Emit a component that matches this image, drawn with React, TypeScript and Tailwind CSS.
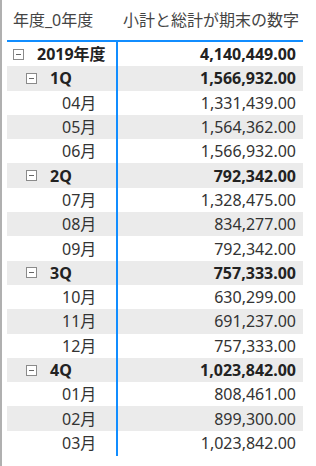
import React from "react";

type Row = { label: string; value: string; level: 0 | 1 | 2; shaded: boolean };

const rows: Row[] = [
	{ label: "2019年度", value: "4,140,449.00", level: 0, shaded: false },
	{ label: "1Q", value: "1,566,932.00", level: 1, shaded: true },
	{ label: "04月", value: "1,331,439.00", level: 2, shaded: false },
	{ label: "05月", value: "1,564,362.00", level: 2, shaded: true },
	{ label: "06月", value: "1,566,932.00", level: 2, shaded: false },
	{ label: "2Q", value: "792,342.00", level: 1, shaded: true },
	{ label: "07月", value: "1,328,475.00", level: 2, shaded: false },
	{ label: "08月", value: "834,277.00", level: 2, shaded: true },
	{ label: "09月", value: "792,342.00", level: 2, shaded: false },
	{ label: "3Q", value: "757,333.00", level: 1, shaded: true },
	{ label: "10月", value: "630,299.00", level: 2, shaded: false },
	{ label: "11月", value: "691,237.00", level: 2, shaded: true },
	{ label: "12月", value: "757,333.00", level: 2, shaded: false },
	{ label: "4Q", value: "1,023,842.00", level: 1, shaded: true },
	{ label: "01月", value: "808,461.00", level: 2, shaded: false },
	{ label: "02月", value: "899,300.00", level: 2, shaded: true },
	{ label: "03月", value: "1,023,842.00", level: 2, shaded: false },
];

function Toggle() {
	return (
		<span className="flex h-[11px] w-[11px] shrink-0 items-center justify-center border border-[#8a8a8a] bg-white">
			<span className="h-px w-[5px] bg-[#666]" />
		</span>
	);
}

export default function App() {
	return (
		<div
			className="h-[466px] w-[316px] overflow-hidden border-l-2 border-[#b0b0b0] bg-white text-[16px] leading-none text-[#333]"
			style={{ fontFamily: '"Noto Sans", "Noto Sans CJK JP", sans-serif' }}
		>
			<div className="ml-[5px] w-[296px]">
				<div className="flex h-[42px] border-b-2 border-[#118dff]">
					<div className="w-[109px] whitespace-nowrap pl-[6px] pt-[12px] text-[#444]">年度_0年度</div>
					<div className="flex-1 whitespace-nowrap pl-[7px] pt-[12px] text-[#444]">小計と総計が期末の数字</div>
				</div>
				<div className="relative">
					<div className="absolute left-[109px] top-[-2px] h-[416px] w-[1.5px] bg-[#118dff]" />
					{rows.map((r, i) => (
						<div key={i} className={`flex h-[24.3px] items-center ${r.shaded ? "bg-[#ebebeb]" : ""}`}>
							<div className="flex w-[109px] items-center whitespace-nowrap">
								{r.level === 0 && (
									<div className="flex items-center pl-[6px]">
										<Toggle />
										<span className="ml-[13px] font-bold text-[#222]">{r.label}</span>
									</div>
								)}
								{r.level === 1 && (
									<div className="flex items-center pl-[19px]">
										<Toggle />
										<span className="ml-[13px] font-bold text-[#222]">{r.label}</span>
									</div>
								)}
								{r.level === 2 && <span className="pl-[55px]">{r.label}</span>}
							</div>
							<div className={`flex-1 pr-[7px] text-right ${r.level < 2 ? "font-bold text-[#222]" : ""}`}>
								{r.value}
							</div>
						</div>
					))}
				</div>
			</div>
		</div>
	);
}
